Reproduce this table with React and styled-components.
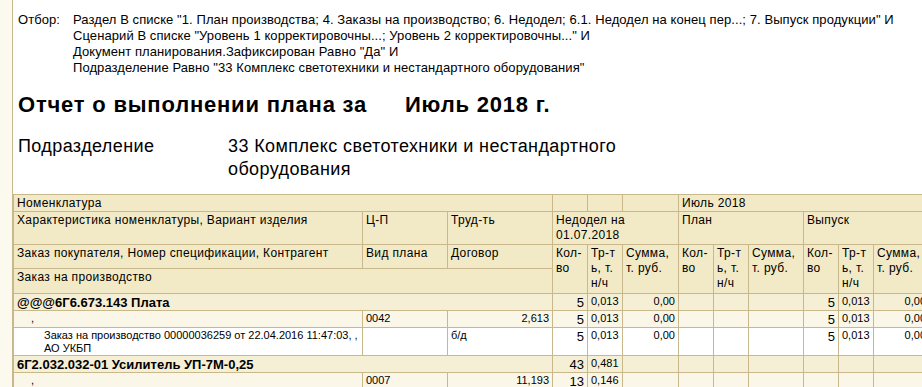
import React from 'react'
import styled, { createGlobalStyle } from 'styled-components'

const Global = createGlobalStyle`
  html, body {
    margin: 0;
    padding: 0;
    background: #fff;
  }
  body {
    font-family: "Liberation Sans", Arial, sans-serif;
    color: #000;
  }
`

const Page = styled.div`
  display: flex;
  width: 922px;
  height: 387px;
  overflow: hidden;
`

const Gutter = styled.div`
  flex: 0 0 12px;
  background: #fcf9ef;
  border-right: 1px solid #c8b88c;
`

const Sheet = styled.div`
  flex: 1 1 auto;
  min-width: 0;
  display: flex;
  flex-direction: column;
`

const Filter = styled.div`
  display: grid;
  grid-template-columns: 55px 1fr;
  padding: 12px 0 0 5px;
  font-size: 13px;
  line-height: 16px;
  letter-spacing: 0.08px;
  white-space: nowrap;
`

const FilterLines = styled.div`
  display: flex;
  flex-direction: column;
`

const Title = styled.h1`
  display: flex;
  margin: 0;
  padding: 16px 0 0 5px;
  font-size: 22px;
  line-height: 26px;
  letter-spacing: 0.8px;
  font-weight: bold;
  white-space: nowrap;
`

const TitleLead = styled.span`
  flex: 0 0 387px;
`

const Unit = styled.div`
  display: grid;
  grid-template-columns: 210px 410px;
  padding: 17px 0 0 5px;
  font-size: 18px;
  line-height: 23px;
  letter-spacing: 0.4px;
`

const Table = styled.table`
  margin-top: 13px;
  border-collapse: collapse;
  table-layout: fixed;
  width: 916px;
  flex: 0 0 auto;
`

const Th = styled.th`
  background: #f2eac6;
  border: 1px solid #c8b88c;
  font-weight: normal;
  font-size: 12px;
  line-height: 15px;
  letter-spacing: 0.35px;
  text-align: left;
  vertical-align: top;
  padding: 1px 3px 0;
  white-space: nowrap;
  overflow: hidden;
`

const HeadRow = styled.tr`
  height: ${p => p.$h}px;
`

const Row = styled.tr`
  height: ${p => p.$h || 17}px;
  background: ${p => (p.$kind === 'group' ? '#f5efd6' : p.$kind === 'item' ? '#faf6e8' : '#fff')};
`

const Td = styled.td`
  border: 1px solid #c8b88c;
  padding: 1px 3px 0 ${p => p.$indent || 3}px;
  vertical-align: top;
  font-size: ${p => (p.$big ? 13 : 11)}px;
  line-height: ${p => (p.$big ? 15 : 13)}px;
  font-weight: ${p => (p.$bold ? 'bold' : 'normal')};
  text-align: ${p => (p.$right ? 'right' : 'left')};
  white-space: nowrap;
  overflow: hidden;
`

const widths = [349, 85, 105, 35, 35, 56, 35, 35, 55, 35, 35, 56]

const filterLines = [
  'Раздел В списке "1. План производства; 4. Заказы на производство; 6. Недодел; 6.1. Недодел на конец пер...; 7. Выпуск продукции" И',
  'Сценарий В списке "Уровень 1 корректировочны...; Уровень 2 корректировочны..." И',
  'Документ планирования.Зафиксирован Равно "Да" И',
  'Подразделение Равно "33 Комплекс светотехники и нестандартного оборудования"',
]

const subHeads = [
  ['Кол-', 'во'],
  ['Тр-т', 'ь, т.', 'н/ч'],
  ['Сумма,', 'т. руб.'],
]

function Lines({ items }) {
  return items.map((t, i) => (
    <React.Fragment key={i}>
      {i > 0 && <br />}
      {t}
    </React.Fragment>
  ))
}

// nine figures: недодел / план / выпуск
function Figures({ values }) {
  return values.map((v, i) => (
    <Td key={i} $right={i % 3 !== 1} $big={i % 3 === 0}>
      {v}
    </Td>
  ))
}

const rows = [
  {
    kind: 'group',
    name: '@@@6Г6.673.143 Плата',
    values: ['5', '0,013', '0,00', '', '', '', '5', '0,013', '0,00'],
  },
  {
    kind: 'item',
    cells: [',', '0042', '2,613'],
    values: ['5', '0,013', '0,00', '', '', '', '5', '0,013', '0,00'],
  },
  {
    kind: 'order',
    h: 28,
    cells: ['Заказ на производство 00000036259 от 22.04.2016 11:47:03, ,', '', 'б/д'],
    second: 'АО УКБП',
    values: ['5', '0,013', '0,00', '', '', '', '5', '0,013', '0,00'],
  },
  {
    kind: 'group',
    name: '6Г2.032.032-01 Усилитель УП-7М-0,25',
    values: ['43', '0,481', '', '', '', '', '', '', ''],
  },
  {
    kind: 'item',
    cells: [',', '0007', '11,193'],
    values: ['13', '0,146', '', '', '', '', '', '', ''],
  },
]

export default function App() {
  return (
    <Page>
      <Global />
      <Gutter />
      <Sheet>
        <Filter>
          <span>Отбор:</span>
          <FilterLines>
            {filterLines.map(l => (
              <span key={l}>{l}</span>
            ))}
          </FilterLines>
        </Filter>

        <Title>
          <TitleLead>Отчет о выполнении плана за</TitleLead>
          <span>Июль 2018 г.</span>
        </Title>

        <Unit>
          <span>Подразделение</span>
          <span>33 Комплекс светотехники и нестандартного оборудования</span>
        </Unit>

        <Table>
          <colgroup>
            {widths.map((w, i) => (
              <col key={i} style={{ width: w }} />
            ))}
          </colgroup>
          <thead>
            <HeadRow $h={17}>
              <Th colSpan={3}>Номенклатура</Th>
              <Th />
              <Th />
              <Th />
              <Th colSpan={6}>Июль 2018</Th>
            </HeadRow>
            <HeadRow $h={33}>
              <Th>Характеристика номенклатуры, Вариант изделия</Th>
              <Th>Ц-П</Th>
              <Th>Труд-ть</Th>
              <Th colSpan={3}>
                <Lines items={['Недодел на', '01.07.2018']} />
              </Th>
              <Th colSpan={3}>План</Th>
              <Th colSpan={3}>Выпуск</Th>
            </HeadRow>
            <HeadRow $h={24}>
              <Th>Заказ покупателя, Номер спецификации, Контрагент</Th>
              <Th>Вид плана</Th>
              <Th>Договор</Th>
              {[0, 1, 2].map(g =>
                subHeads.map((s, i) => (
                  <Th key={g * 3 + i} rowSpan={2}>
                    <Lines items={s} />
                  </Th>
                ))
              )}
            </HeadRow>
            <HeadRow $h={25}>
              <Th colSpan={3}>Заказ на производство</Th>
            </HeadRow>
          </thead>
          <tbody>
            {rows.map((r, i) => (
              <Row key={i} $kind={r.kind} $h={r.h}>
                {r.kind === 'group' ? (
                  <Td colSpan={3} $big $bold>
                    {r.name}
                  </Td>
                ) : (
                  <>
                    <Td $indent={r.kind === 'order' ? 30 : 17}>
                      {r.cells[0]}
                      {r.second && (
                        <>
                          <br />
                          {r.second}
                        </>
                      )}
                    </Td>
                    <Td>{r.cells[1]}</Td>
                    <Td $right={r.kind === 'item'}>{r.cells[2]}</Td>
                  </>
                )}
                <Figures values={r.values} />
              </Row>
            ))}
          </tbody>
        </Table>
      </Sheet>
    </Page>
  )
}
